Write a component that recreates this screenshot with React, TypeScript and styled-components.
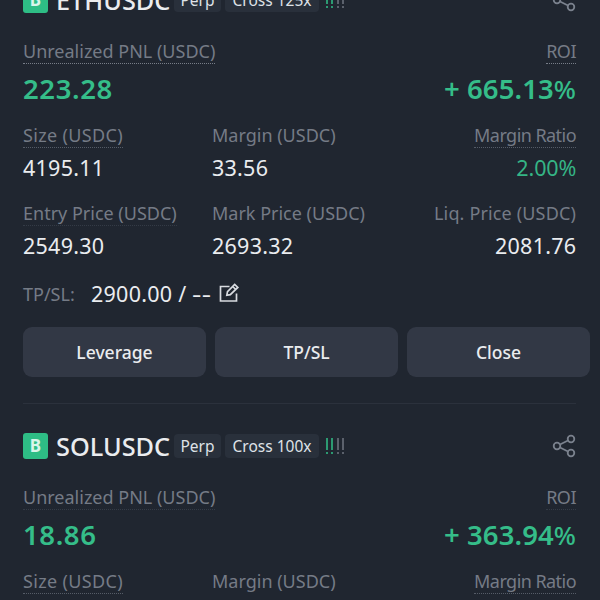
import React from "react";
import styled, { createGlobalStyle } from "styled-components";

const GlobalStyle = createGlobalStyle`
  * { box-sizing: border-box; }
  body {
    margin: 0;
    background: #202630;
    font-family: "Noto Sans", "Open Sans", sans-serif;
    color: #eaecef;
  }
`;

const Screen = styled.main`
  width: 600px;
  height: 600px;
  overflow: hidden;
  background: #202630;
`;

const List = styled.div`
  display: flex;
  flex-direction: column;
  margin-top: -19px;
`;

const Card = styled.article`
  flex: none;
  height: 446px;
  padding: 0 24px 0 23px;
`;

const Header = styled.header`
  display: flex;
  align-items: center;
  height: 38px;
`;

const SideBadge = styled.span`
  display: flex;
  align-items: center;
  justify-content: center;
  width: 25px;
  height: 26px;
  border-radius: 3px;
  background: #2ebd85;
  color: #d9f5ea;
  font-size: 17px;
  font-weight: 700;
  line-height: 26px;
`;

const Symbol = styled.h2`
  width: 126px;
  margin: 0;
  padding: 1px 0 0 8px;
  font-size: 25.3px;
  font-weight: 500;
  line-height: 37px;
  letter-spacing: 0;
  white-space: nowrap;
`;

const Tag = styled.span<{ $width: number }>`
  width: ${(p) => p.$width}px;
  height: 24px;
  margin-right: 4px;
  border-radius: 4px;
  background: #29303b;
  color: #dfe2e7;
  font-size: 15.5px;
  line-height: 25px;
  text-align: center;
  white-space: nowrap;
`;

const Signal = styled.span`
  display: flex;
  gap: 3.3px;
  margin-left: 3px;
`;

const SignalBar = styled.i<{ $on: boolean }>`
  width: 2px;
  height: 16px;
  background: linear-gradient(
    ${(p) => (p.$on ? "#2c9a72" : "#5b616c")} 0 12px,
    transparent 12px 14px,
    ${(p) => (p.$on ? "#2c9a72" : "#5b616c")} 14px
  );
`;

const ShareIcon = styled.svg`
  margin-left: auto;
  width: 24px;
  height: 24px;
  fill: none;
  stroke: #7a818d;
  stroke-width: 1.8;
`;

const Summary = styled.section`
  display: flex;
  justify-content: space-between;
  height: 104px;
  padding-top: 20px;
`;

const Grid = styled.section`
  display: grid;
  grid-template-columns: 189px 189px 1fr;
  grid-template-rows: 78px 72px;
`;

const Metric = styled.div<{ $end?: boolean }>`
  display: flex;
  flex-direction: column;
  align-items: ${(p) => (p.$end ? "flex-end" : "flex-start")};
`;

const Label = styled.span<{ $line?: "strong" | "soft" | "faint"; $track?: number }>`
  height: 25px;
  border-bottom: 1px dotted
    ${(p) =>
      p.$line === "strong" ? "#777d88" : p.$line === "soft" ? "#555c67" : p.$line === "faint" ? "#343b46" : "transparent"};
  color: #757b86;
  font-size: 18px;
  line-height: 25px;
  letter-spacing: ${(p) => p.$track ?? 0}px;
  white-space: nowrap;
`;

const Total = styled.strong<{ $track?: number }>`
  color: #35bd89;
  font-size: 27.5px;
  font-weight: 600;
  line-height: 50px;
  letter-spacing: ${(p) => p.$track ?? 0.6}px;
  white-space: nowrap;
`;

const Percent = styled.span`
  font-size: 26px;
  font-weight: 500;
  letter-spacing: 0;
  line-height: 1;
`;

const Value = styled.span<{ $good?: boolean; $end?: boolean }>`
  margin-right: ${(p) => (p.$end ? "-0.3px" : "0")};
  color: ${(p) => (p.$good ? "#35b585" : "#eaecef")};
  font-size: 21.5px;
  line-height: 40px;
  letter-spacing: ${(p) => (p.$good ? -0.1 : 0.25)}px;
  white-space: nowrap;
`;

const Orders = styled.div`
  display: flex;
  align-items: center;
  height: 42px;
`;

const OrdersLabel = styled.span`
  width: 68px;
  color: #757b86;
  font-size: 18px;
`;

const Dashes = styled.span`
  display: inline-block;
  transform: scaleX(1.35);
  transform-origin: left center;
  letter-spacing: 0.3px;
`;

const EditIcon = styled.svg`
  width: 22px;
  height: 22px;
  margin-left: 11px;
  fill: none;
  stroke: #d8dbe0;
  stroke-width: 1.7;
`;

const Actions = styled.div`
  display: grid;
  grid-template-columns: repeat(3, 1fr);
  gap: 9px;
  width: 567px;
  margin-top: 12px;
`;

const Action = styled.button`
  height: 50px;
  padding: 0;
  border: 0;
  border-radius: 9px;
  background: #323845;
  color: #eaecef;
  font-family: inherit;
  font-size: 17.5px;
  font-weight: 500;
`;

const Divider = styled.hr`
  height: 1px;
  margin: 26px 0 0;
  border: 0;
  background: #2b313c;
`;

type Position = {
  symbol: string;
  leverage: string;
  pnl: string;
  roi: string;
  size?: string;
  margin?: string;
  ratio?: string;
  entry?: string;
  mark?: string;
  liq?: string;
  tp?: string;
  line: "strong" | "faint";
};

const positions: Position[] = [
  {
    symbol: "ETHUSDC", leverage: "Cross 125x", pnl: "223.28", roi: "+ 665.13",
    size: "4195.11", margin: "33.56", ratio: "2.00%", entry: "2549.30", mark: "2693.32",
    liq: "2081.76", tp: "2900.00", line: "strong",
  },
  {
    symbol: "SOLUSDC", leverage: "Cross 100x", pnl: "18.86", roi: "+ 363.94",
    line: "faint",
  },
];

const EMPTY = "--";

function PositionCard({ p }: { p: Position }) {
  return (
    <Card>
      <Header>
        <SideBadge>B</SideBadge>
        <Symbol>{p.symbol}</Symbol>
        <Tag $width={47}>Perp</Tag>
        <Tag $width={94}>{p.leverage}</Tag>
        <Signal>
          {[true, true, false, false].map((on, i) => <SignalBar key={i} $on={on} />)}
        </Signal>
        <ShareIcon viewBox="0 0 24 24">
          <circle cx="5" cy="12" r="3.3" />
          <circle cx="19" cy="5" r="3.3" />
          <circle cx="19" cy="19" r="3.3" />
          <path d="M8 10.5 16 6.5M8 13.5 16 17.5" />
        </ShareIcon>
      </Header>
      <Summary>
        <Metric>
          <Label $line={p.line}>Unrealized PNL (USDC)</Label>
          <Total>{p.pnl}</Total>
        </Metric>
        <Metric $end>
          <Label $line={p.line} $track={-0.5}>ROI</Label>
          <Total $track={0.1}>{p.roi}<Percent>%</Percent></Total>
        </Metric>
      </Summary>
      <Grid>
        <Metric>
          <Label $line="soft" $track={0.35}>Size (USDC)</Label>
          <Value>{p.size ?? EMPTY}</Value>
        </Metric>
        <Metric>
          <Label>Margin (USDC)</Label>
          <Value>{p.margin ?? EMPTY}</Value>
        </Metric>
        <Metric $end>
          <Label $line="soft" $track={-0.55}>Margin Ratio</Label>
          <Value $good $end>{p.ratio ?? EMPTY}</Value>
        </Metric>
        <Metric>
          <Label $line="faint">Entry Price (USDC)</Label>
          <Value>{p.entry ?? EMPTY}</Value>
        </Metric>
        <Metric>
          <Label>Mark Price (USDC)</Label>
          <Value>{p.mark ?? EMPTY}</Value>
        </Metric>
        <Metric $end>
          <Label $track={0.15}>Liq. Price (USDC)</Label>
          <Value $end>{p.liq ?? EMPTY}</Value>
        </Metric>
      </Grid>
      <Orders>
        <OrdersLabel>TP/SL:</OrdersLabel>
        <Value>{p.tp ?? EMPTY} / <Dashes>--</Dashes></Value>
        <EditIcon viewBox="0 0 22 22">
          <path d="M11.500 3.500H2.500V18H18.500V10.500" />
          <path d="m8.800 12.300.7-3.600L16.700 1.500 19.800 4.400l-7.500 7.300zM14.700 3.500l3 3" />
        </EditIcon>
      </Orders>
      <Actions>
        <Action>Leverage</Action>
        <Action>TP/SL</Action>
        <Action>Close</Action>
      </Actions>
      <Divider />
    </Card>
  );
}

export default function App() {
  return (
    <Screen>
      <GlobalStyle />
      <List>
        {positions.map((p) => <PositionCard key={p.symbol} p={p} />)}
      </List>
    </Screen>
  );
}
